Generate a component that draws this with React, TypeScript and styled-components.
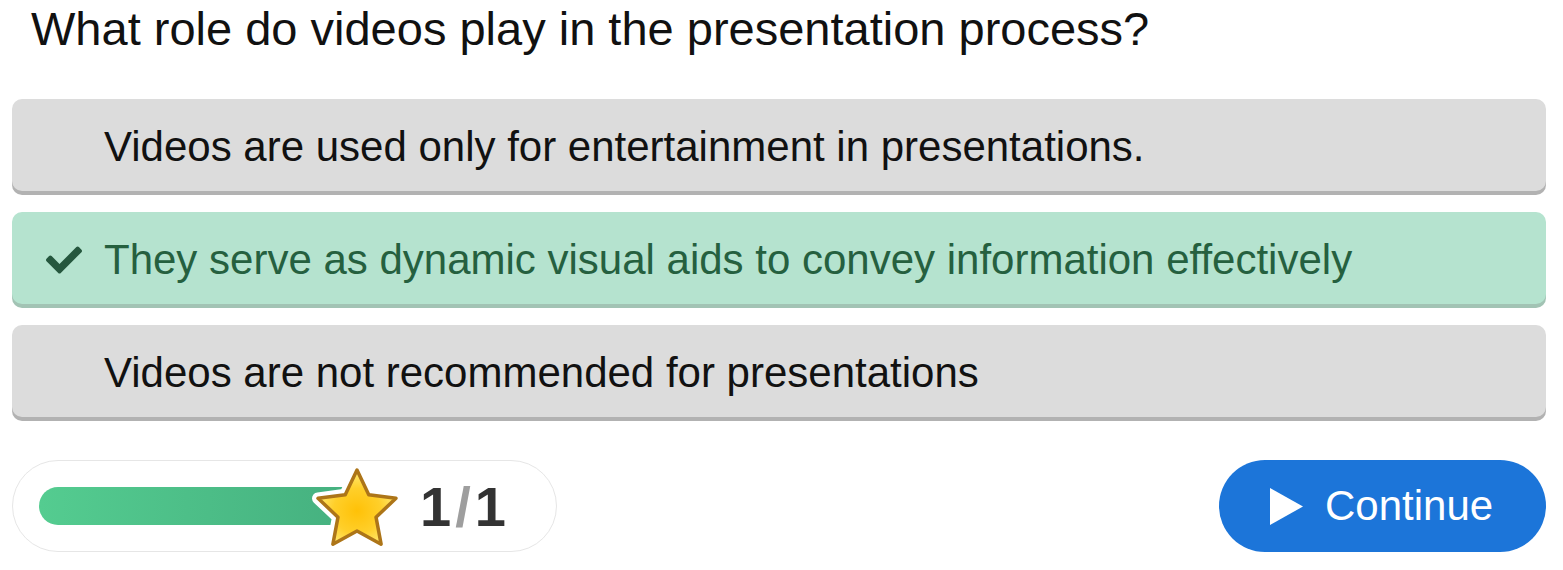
import React from "react";
import styled, { createGlobalStyle } from "styled-components";
import { FaCheck } from "react-icons/fa";

const GlobalStyle = createGlobalStyle`
  html, body { margin: 0; padding: 0; background: #ffffff; }
  body { font-family: "Liberation Sans", Arial, sans-serif; }
  * { box-sizing: border-box; }
`;

const Page = styled.div`
  width: 1563px;
  padding: 2px 17px 0 12px;
  display: flex;
  flex-direction: column;
`;

const Question = styled.h1`
  margin: 0 0 43px 19px;
  font-size: 47px;
  line-height: 54px;
  font-weight: 400;
  color: #111;
`;

const Options = styled.div`
  display: flex;
  flex-direction: column;
  gap: 21px;
`;

const Option = styled.div<{ $correct?: boolean }>`
  height: 92px;
  display: flex;
  align-items: center;
  padding: 3px 0 0 34px;
  border-radius: 10px;
  background: ${(p) => (p.$correct ? "#b5e3cf" : "#dcdcdc")};
  box-shadow: 0 4px 0 ${(p) => (p.$correct ? "#a2c3b4" : "#b2b2b2")};
  color: ${(p) => (p.$correct ? "#25603f" : "#111")};
  font-size: 42px;
`;

const IconSlot = styled.span`
  width: 58px;
  display: flex;
  align-items: center;
  color: #25573e;
`;

const Footer = styled.div`
  margin-top: 43px;
  display: flex;
  justify-content: space-between;
  align-items: center;
`;

const ProgressPill = styled.div`
  width: 545px;
  height: 92px;
  border: 1px solid #e6e6e6;
  border-radius: 46px;
  display: flex;
  align-items: center;
  padding-left: 26px;
`;

const Track = styled.div`
  position: relative;
  width: 367px;
  height: 38px;
`;

const Fill = styled.div`
  width: 318px;
  height: 38px;
  border-radius: 19px 0 0 19px;
  background: linear-gradient(90deg, #54cc90 0%, #45b07f 100%);
`;

const StarIcon = styled.svg`
  position: absolute;
  right: 0;
  top: -23px;
`;

const Score = styled.div`
  margin-left: 14px;
  font-size: 56px;
  font-weight: 700;
  color: #333;
  display: flex;
  align-items: center;
`;

const Slash = styled.span`
  color: #9e9e9e;
  margin: 0 4px;
`;

const ContinueButton = styled.button`
  height: 92px;
  width: 327px;
  border: none;
  border-radius: 46px;
  background: #1c75d9;
  color: #fff;
  font-family: "Liberation Sans", Arial, sans-serif;
  font-size: 42px;
  display: flex;
  align-items: center;
  gap: 22px;
  padding: 0 0 0 51px;
  cursor: pointer;
`;

const Star = () => {
  const R = 41;
  const r = 20;
  const pts: string[] = [];
  for (let i = 0; i < 10; i++) {
    const ang = (-90 + i * 36) * (Math.PI / 180);
    const rad = i % 2 === 0 ? R : r;
    pts.push(`${(rad * Math.cos(ang)).toFixed(2)},${(rad * Math.sin(ang)).toFixed(2)}`);
  }
  const d = pts.join(" ");
  return (
    <StarIcon width="98" height="94" viewBox="-49 -47 98 94">
      <defs>
        <radialGradient id="sg" cx="50%" cy="55%" r="55%">
          <stop offset="0%" stopColor="#ffc107" />
          <stop offset="55%" stopColor="#ffcf2a" />
          <stop offset="100%" stopColor="#ffec7a" />
        </radialGradient>
      </defs>
      <polygon points={d} fill="#fff" stroke="#fff" strokeWidth="12" strokeLinejoin="round" />
      <polygon points={d} fill="url(#sg)" stroke="#ad7518" strokeWidth="3.5" strokeLinejoin="round" />
    </StarIcon>
  );
};

const options = [
  { text: "Videos are used only for entertainment in presentations.", correct: false },
  { text: "They serve as dynamic visual aids to convey information effectively", correct: true },
  { text: "Videos are not recommended for presentations", correct: false },
];

export default function App() {
  return (
    <>
      <GlobalStyle />
      <Page>
        <Question>What role do videos play in the presentation process?</Question>
        <Options>
          {options.map((o) => (
            <Option key={o.text} $correct={o.correct}>
              <IconSlot>{o.correct && <FaCheck size={36} />}</IconSlot>
              {o.text}
            </Option>
          ))}
        </Options>
        <Footer>
          <ProgressPill>
            <Track>
              <Fill />
              <Star />
            </Track>
            <Score>
              <span>1</span>
              <Slash>/</Slash>
              <span>1</span>
            </Score>
          </ProgressPill>
          <ContinueButton>
            <svg width="33" height="37" viewBox="0 0 33 37">
              <polygon points="0,0 33,18.5 0,37" fill="#fff" />
            </svg>
            Continue
          </ContinueButton>
        </Footer>
      </Page>
    </>
  );
}
